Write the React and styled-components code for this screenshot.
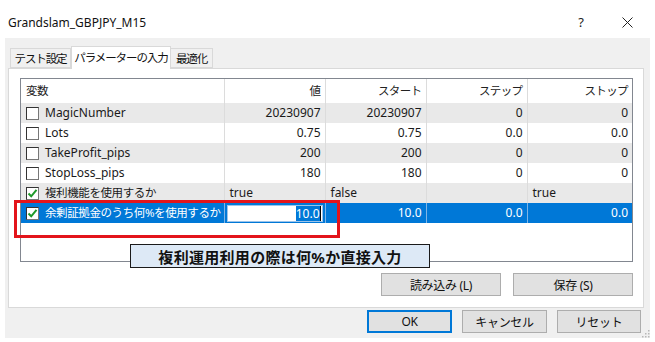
import React from 'react';
import styled, { createGlobalStyle } from 'styled-components';

const GlobalStyle = createGlobalStyle`
  html, body { margin: 0; padding: 0; background: #fff; }
  body {
    font-family: "Noto Sans", "Noto Sans CJK JP", sans-serif;
    font-size: 12px;
    color: #000;
  }
`;

const jp = `"Noto Sans", "Noto Sans CJK JP", sans-serif`;

const Window = styled.div`
  position: relative;
  width: 655px;
  height: 342px;
  display: flex;
  flex-direction: column;
  overflow: hidden;
`;

const TitleBar = styled.div`
  height: 38px;
  box-sizing: border-box;
  padding: 6px 0 0 8px;
  display: flex;
  align-items: center;
  color: #111;
`;

const TitleText = styled.span`
  font-size: 12px;
  flex: 1;
`;

const TitleBtn = styled.span`
  width: 46px;
  display: flex;
  justify-content: center;
  font-size: 13px;
  color: #222;
`;

const Client = styled.div`
  margin-left: 5px;
  width: 645px;
  height: 300px;
  background: #f0f0f0;
  box-sizing: border-box;
  padding: 8px 0 0 3px;
  display: flex;
  flex-direction: column;
`;

const Tabs = styled.div`
  height: 22px;
  display: flex;
  align-items: flex-end;
  padding-left: 2px;
  position: relative;
  z-index: 1;
`;

const Tab = styled.div`
  width: ${p => p.$w}px;
  height: ${p => (p.$active ? 23 : 20)}px;
  margin-bottom: ${p => (p.$active ? -1 : 0)}px;
  box-sizing: border-box;
  border: 1px solid #d9d9d9;
  border-bottom: ${p => (p.$active ? 'none' : '1px solid #d9d9d9')};
  border-left: ${p => (p.$first || p.$active ? '1px solid #d9d9d9' : 'none')};
  background: ${p => (p.$active ? '#fff' : '#f0f0f0')};
  display: flex;
  align-items: center;
  justify-content: center;
  padding-bottom: ${p => (p.$active ? 3 : 0)}px;
  font-family: ${jp};
  font-size: 11.5px;
  letter-spacing: -1.1px;
  color: #111;
`;

const Panel = styled.div`
  width: 636px;
  height: 240px;
  box-sizing: border-box;
  border: 1px solid #d9d9d9;
  background: #fff;
  padding: 9px 10px 0 11px;
  display: flex;
  flex-direction: column;
`;

const GridBox = styled.div`
  width: 613px;
  height: 184px;
  box-sizing: border-box;
  border: 1px solid #828790;
  overflow: hidden;
`;

const Table = styled.table`
  width: 611px;
  border-collapse: collapse;
  table-layout: fixed;
`;

const Row = styled.tr`
  height: ${p => (p.$head ? 24 : 20)}px;
  background: ${p =>
    p.$tone === 'gray' ? '#e9e9e9' : p.$tone === 'sel' ? '#0078d7' : '#fff'};
  color: ${p => (p.$tone === 'sel' ? '#fff' : '#1a1a1a')};
`;

const Cell = styled.td`
  padding: 0 4px 0 5px;
  text-align: ${p => p.$align || 'right'};
  border-right: 1px solid ${p => (p.$sel ? '#7fb5e6' : '#dcdcdc')};
  white-space: nowrap;
  overflow: hidden;
  font-size: 12px;
  line-height: 18px;
  &:last-child { border-right: none; }
`;

const HeadCell = styled(Cell)`
  font-family: ${jp};
  font-size: 11.5px;
  letter-spacing: -0.6px;
  color: #222;
`;

const NameWrap = styled.div`
  display: flex;
  align-items: center;
  gap: 6px;
  font-family: ${jp};
  font-size: ${p => (p.$jp ? '11.5px' : '12px')};
  letter-spacing: ${p => (p.$jp ? '-0.4px' : '0')};
`;

const Box = styled.span`
  width: 13px;
  height: 13px;
  box-sizing: border-box;
  border: 1px solid #333;
  border-right-color: #777;
  border-bottom-color: #777;
  background: #fff;
  display: inline-flex;
  align-items: center;
  justify-content: center;
  flex: none;
`;

const Edit = styled.div`
  height: 17px;
  margin: 0 -2px 0 -3px;
  box-sizing: border-box;
  background: #fff;
  border: 1px solid #9cc4ea;
  display: flex;
  justify-content: flex-end;
  align-items: center;
  padding-right: 1px;
`;

const Picked = styled.span`
  background: #0078d7;
  color: #fff;
  line-height: 15px;
  border-right: 1px solid #000;
`;

const ButtonRow = styled.div`
  display: flex;
  justify-content: flex-end;
  gap: ${p => p.$gap}px;
  margin-top: ${p => p.$top}px;
  padding-right: ${p => p.$right}px;
`;

const Button = styled.div`
  width: ${p => p.$w}px;
  height: 23px;
  box-sizing: border-box;
  background: #e1e1e1;
  border: ${p => (p.$focus ? '2px solid #0078d7' : '1px solid #adadad')};
  display: flex;
  align-items: center;
  justify-content: center;
  font-family: ${jp};
  font-size: 12px;
  letter-spacing: -0.3px;
  color: #111;
`;

const RedFrame = styled.div`
  position: absolute;
  left: 14px;
  top: 200px;
  width: 326px;
  height: 38px;
  box-sizing: border-box;
  border: 3px solid #e3141b;
`;

const Note = styled.div`
  position: absolute;
  left: 130px;
  top: 244px;
  width: 300px;
  height: 24px;
  box-sizing: border-box;
  background: #dde9f6;
  border: 1px solid #1a1a1a;
  display: flex;
  align-items: center;
  justify-content: center;
  font-family: ${jp};
  font-weight: 700;
  font-size: 15px;
  letter-spacing: 0.3px;
  color: #111;
`;

const Grip = styled.svg`
  position: absolute;
  right: 5px;
  bottom: 4px;
`;

const Check = ({ on }) => (
  <Box>
    {on && (
      <svg width="11" height="11" viewBox="0 0 11 11">
        <path d="M1.5 5.5 L4.2 8.3 L9.5 1.8" fill="none" stroke="#1f9a2a" strokeWidth="2" />
      </svg>
    )}
  </Box>
);

const rows = [
  { name: 'MagicNumber', v: '20230907', s: '20230907', st: '0', sp: '0', tone: 'gray' },
  { name: 'Lots', v: '0.75', s: '0.75', st: '0.0', sp: '0.0', tone: 'white' },
  { name: 'TakeProfit_pips', v: '200', s: '200', st: '0', sp: '0', tone: 'gray' },
  { name: 'StopLoss_pips', v: '180', s: '180', st: '0', sp: '0', tone: 'white' },
  { name: '複利機能を使用するか', v: 'true', s: 'false', st: '', sp: 'true', tone: 'gray', on: true, jp: true, left: true },
];

export default function App() {
  return (
    <Window>
      <GlobalStyle />
      <TitleBar>
        <TitleText>Grandslam_GBPJPY_M15</TitleText>
        <TitleBtn>?</TitleBtn>
        <TitleBtn style={{ marginRight: 5 }}>
          <svg width="11" height="11" viewBox="0 0 11 11">
            <path d="M0.5 0.5 L10.5 10.5 M10.5 0.5 L0.5 10.5" stroke="#222" strokeWidth="1" />
          </svg>
        </TitleBtn>
      </TitleBar>
      <Client>
        <Tabs>
          <Tab $w={61} $first>テスト設定</Tab>
          <Tab $w={100} $active>パラメーターの入力</Tab>
          <Tab $w={42}>最適化</Tab>
        </Tabs>
        <Panel>
          <GridBox>
            <Table>
              <colgroup>
                <col style={{ width: 203 }} />
                <col style={{ width: 101 }} />
                <col style={{ width: 101 }} />
                <col style={{ width: 101 }} />
                <col />
              </colgroup>
              <tbody>
                <Row $head>
                  <HeadCell $align="left">変数</HeadCell>
                  <HeadCell>値</HeadCell>
                  <HeadCell>スタート</HeadCell>
                  <HeadCell>ステップ</HeadCell>
                  <HeadCell>ストップ</HeadCell>
                </Row>
                {rows.map(r => (
                  <Row key={r.name} $tone={r.tone}>
                    <Cell $align="left">
                      <NameWrap $jp={r.jp}>
                        <Check on={r.on} />
                        {r.name}
                      </NameWrap>
                    </Cell>
                    <Cell $align={r.left ? 'left' : 'right'}>{r.v}</Cell>
                    <Cell $align={r.left ? 'left' : 'right'}>{r.s}</Cell>
                    <Cell $align={r.left ? 'left' : 'right'}>{r.st}</Cell>
                    <Cell $align={r.left ? 'left' : 'right'}>{r.sp}</Cell>
                  </Row>
                ))}
                <Row $tone="sel">
                  <Cell $align="left" $sel>
                    <NameWrap $jp>
                      <Check on />
                      余剰証拠金のうち何%を使用するか
                    </NameWrap>
                  </Cell>
                  <Cell $sel>
                    <Edit><Picked>10.0</Picked></Edit>
                  </Cell>
                  <Cell $sel>10.0</Cell>
                  <Cell $sel>0.0</Cell>
                  <Cell $sel>0.0</Cell>
                </Row>
              </tbody>
            </Table>
          </GridBox>
          <ButtonRow $gap={12} $top={11} $right={0}>
            <Button $w={120}>読み込み (L)</Button>
            <Button $w={120}>保存 (S)</Button>
          </ButtonRow>
        </Panel>
        <ButtonRow $gap={10} $top={2} $right={9}>
          <Button $w={85} $focus>OK</Button>
          <Button $w={85}>キャンセル</Button>
          <Button $w={84}>リセット</Button>
        </ButtonRow>
      </Client>
      <RedFrame />
      <Note>複利運用利用の際は何%か直接入力</Note>
      <Grip width="8" height="8" viewBox="0 0 8 8">
        <rect x="6" y="0" width="1.5" height="1.5" fill="#b8b8b8" />
        <rect x="3" y="3" width="1.5" height="1.5" fill="#b8b8b8" />
        <rect x="6" y="3" width="1.5" height="1.5" fill="#b8b8b8" />
        <rect x="0" y="6" width="1.5" height="1.5" fill="#b8b8b8" />
        <rect x="3" y="6" width="1.5" height="1.5" fill="#b8b8b8" />
        <rect x="6" y="6" width="1.5" height="1.5" fill="#b8b8b8" />
      </Grip>
    </Window>
  );
}
